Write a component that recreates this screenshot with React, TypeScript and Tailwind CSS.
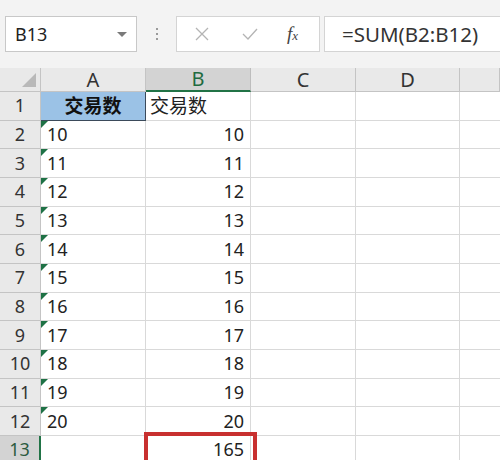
import React from "react"

const font = { fontFamily: '"Noto Sans", "Noto Sans CJK SC", sans-serif' }

const cols = ["A", "B", "C", "D", ""]

function GreenMark() {
    return (
        <span className="absolute left-0 top-0 h-0 w-0 border-t-[7px] border-r-[7px] border-t-[#1e7145] border-r-transparent" />
    )
}

export default function App() {
    const rows = Array.from({ length: 13 }, (_, i) => i + 1)

    return (
        <div className="w-[500px] h-[460px] overflow-hidden bg-white text-[#222]" style={font}>
            {/* formula bar */}
            <div className="h-[68px] bg-[#f3f3f3] flex items-center pl-[5px] gap-0">
                <div className="w-[132px] h-[36px] bg-white border border-[#c8c8c8] flex items-center justify-between pl-[9px] pr-[9px]">
                    <span className="text-[18px]">B13</span>
                    <span className="w-0 h-0 border-l-[5px] border-r-[5px] border-t-[5px] border-l-transparent border-r-transparent border-t-[#7a7a7a]" />
                </div>
                <div className="w-[39px] flex flex-col items-center gap-[3px]">
                    <span className="w-[2px] h-[2px] bg-[#9a9a9a]" />
                    <span className="w-[2px] h-[2px] bg-[#9a9a9a]" />
                    <span className="w-[2px] h-[2px] bg-[#9a9a9a]" />
                </div>
                <div className="w-[144px] h-[36px] bg-white border border-[#d4d4d4] flex items-center">
                    <svg width="14" height="14" viewBox="0 0 14 14" className="ml-[18px]">
                        <path d="M1 1 L13 13 M13 1 L1 13" stroke="#b4b4b4" strokeWidth="1.3" fill="none" />
                    </svg>
                    <svg width="16" height="14" viewBox="0 0 16 14" className="ml-[33px]">
                        <path d="M1 7 L6 12 L15 2" stroke="#b4b4b4" strokeWidth="1.3" fill="none" />
                    </svg>
                    <span
                        className="ml-[29px] text-[19px] italic text-[#444]"
                        style={{ fontFamily: '"Liberation Serif", serif' }}
                    >
                        f<span className="text-[13px]">x</span>
                    </span>
                </div>
                <div className="ml-[4px] flex-1 h-[36px] bg-white border border-[#d4d4d4] border-r-0 flex items-center pl-[17px]">
                    <span className="text-[20.5px] text-[#333]">=SUM(B2:B12)</span>
                </div>
            </div>

            {/* sheet */}
            <div className="relative grid grid-cols-[41px_105px_105px_105px_104px_1fr] grid-rows-[24px_repeat(13,28.67px)]">
                {/* corner */}
                <div className="relative bg-[#e9e9e9] border-r border-b border-[#c4c4c4]">
                    <span className="absolute right-[4px] bottom-[4px] w-0 h-0 border-b-[14px] border-l-[14px] border-b-[#b9b9b9] border-l-transparent" />
                </div>
                {cols.map((c, i) =>
                    c === "B" ? (
                        <div
                            key={i}
                            className="bg-[#d3d3d3] border-r border-[#bdbdbd] border-b-2 border-b-[#217346] flex items-center justify-center text-[20px] text-[#1f6b40]"
                        >
                            {c}
                        </div>
                    ) : (
                        <div
                            key={i}
                            className="bg-[#e9e9e9] border-r border-b border-[#c4c4c4] flex items-center justify-center text-[20px] text-[#333]"
                        >
                            {c}
                        </div>
                    )
                )}

                {rows.map((r) => (
                    <React.Fragment key={r}>
                        <div
                            className={
                                r === 13
                                    ? "bg-[#d3d3d3] border-r-2 border-r-[#217346] border-b border-[#c4c4c4] flex items-center justify-center text-[18px] text-[#2d5a3f]"
                                    : "bg-[#e9e9e9] border-r border-b border-[#c4c4c4] flex items-center justify-center text-[18px] text-[#333]"
                            }
                        >
                            {r}
                        </div>
                        {/* A */}
                        {r === 1 ? (
                            <div className="bg-[#9bc2e6] border-r border-b border-[#3b4a5a] flex items-center justify-center text-[19px] font-bold text-[#111]">
                                交易数
                            </div>
                        ) : (
                            <div className="relative border-r border-b border-[#d9d9d9] flex items-center pl-[6px] text-[18px]">
                                {r <= 12 && <GreenMark />}
                                {r <= 12 ? String(r + 8) : ""}
                            </div>
                        )}
                        {/* B */}
                        <div
                            className={
                                r === 1
                                    ? "border-r border-b border-[#d9d9d9] flex items-center pl-[4px] text-[19px]"
                                    : "border-r border-b border-[#d9d9d9] flex items-center justify-end pr-[6px] text-[18px]"
                            }
                        >
                            {r === 1 ? "交易数" : r === 13 ? "165" : String(r + 8)}
                        </div>
                        <div className="border-r border-b border-[#d9d9d9]" />
                        <div className="border-r border-b border-[#d9d9d9]" />
                        <div className="border-b border-[#d9d9d9]" />
                    </React.Fragment>
                ))}

                {/* highlight around B13 */}
                <div className="absolute left-[144px] top-[364px] w-[113px] h-[40px] border-4 border-[#c8302f]" />
            </div>
        </div>
    )
}
